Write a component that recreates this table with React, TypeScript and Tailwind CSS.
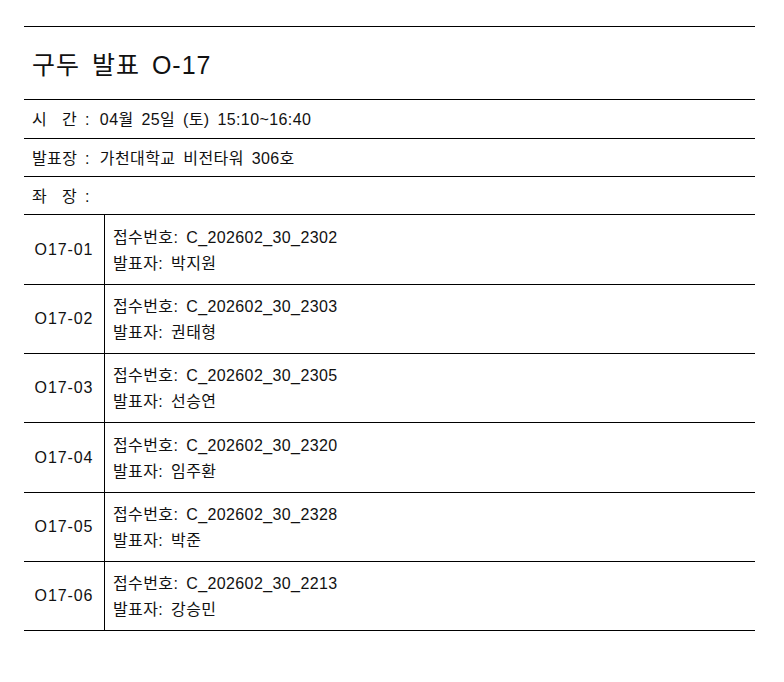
export default function App() {
  const talks = [
    { no: 'O17-01', id: 'C_202602_30_2302', name: '박지원', h: 'h-[70px]' },
    { no: 'O17-02', id: 'C_202602_30_2303', name: '권태형', h: 'h-[69px]' },
    { no: 'O17-03', id: 'C_202602_30_2305', name: '선승연', h: 'h-[69px]' },
    { no: 'O17-04', id: 'C_202602_30_2320', name: '임주환', h: 'h-[70px]' },
    { no: 'O17-05', id: 'C_202602_30_2328', name: '박준', h: 'h-[69px]' },
    { no: 'O17-06', id: 'C_202602_30_2213', name: '강승민', h: 'h-[69px]' },
  ];

  return (
    <div className="min-h-[682px] bg-white pt-[26px] font-['Liberation_Sans','Noto_Sans_CJK_KR',sans-serif] text-[16px] tracking-[0.4px] text-[#111] [word-spacing:3px]">
      <div className="ml-[24px] w-[731px] border-t border-black">
        <div className="flex h-[73px] items-center border-b border-black pl-[8px] pt-[5px] text-[25px] tracking-[1px] [word-spacing:4px]">
          구두 발표 O-17
        </div>

        <div className="flex h-[39px] items-center border-b border-black pl-[8px] pt-[2px]">
          <span className="inline-flex w-[47px] justify-between pr-[2px]">
            <span>시</span>
            <span>간</span>
          </span>
          <span className="pl-[6px] pr-[10px]">:</span>
          <span>04월 25일 (토) 15:10~16:40</span>
        </div>

        <div className="flex h-[38px] items-center border-b border-black pl-[8px] pt-[2px]">
          <span className="w-[47px]">발표장</span>
          <span className="pl-[6px] pr-[10px]">:</span>
          <span>가천대학교 비전타워 306호</span>
        </div>

        <div className="flex h-[38px] items-center border-b border-black pl-[8px] pt-[2px]">
          <span className="inline-flex w-[47px] justify-between pr-[2px]">
            <span>좌</span>
            <span>장</span>
          </span>
          <span className="pl-[6px] pr-[10px]">:</span>
        </div>

        {talks.map(t => (
          <div key={t.no} className={`flex border-b border-black ${t.h}`}>
            <div className="flex w-[81px] items-center justify-center border-r border-black tracking-[0.9px]">
              {t.no}
            </div>
            <div className="flex flex-col justify-center pl-[8px] pt-[2px] leading-[26px]">
              <div>접수번호: {t.id}</div>
              <div>발표자: {t.name}</div>
            </div>
          </div>
        ))}
      </div>
    </div>
  );
}
